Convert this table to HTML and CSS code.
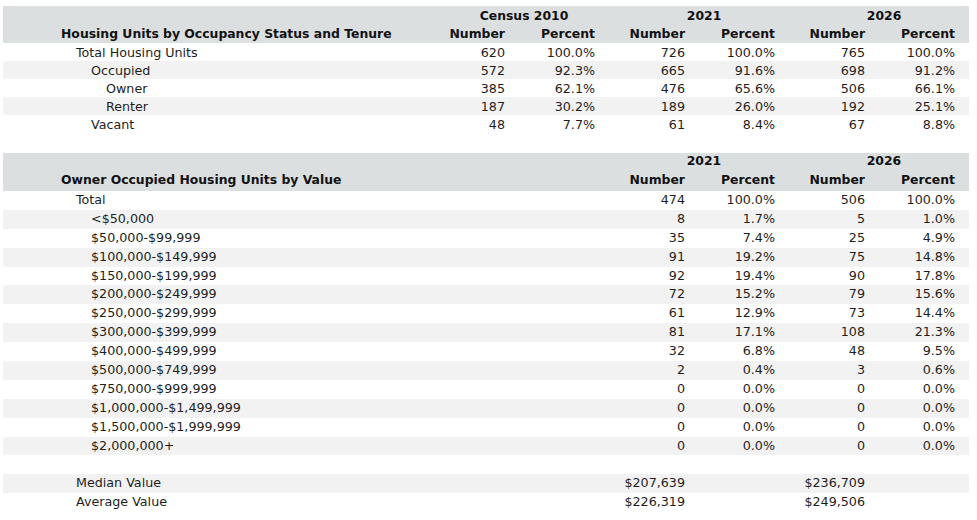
FILE: index.html
```html
<!DOCTYPE html>
<html>
<head>
<meta charset="utf-8">
<link rel="stylesheet" href="styles.css">
</head>
<body>
<div class="page">
<table class="data t1">
  <colgroup><col class="c-label"><col class="c-num"><col class="c-num"><col class="c-num"><col class="c-num"><col class="c-num"><col class="c-num"></colgroup>
  <thead>
    <tr class="h-top"><th></th><th colspan="2" class="yr">Census 2010</th><th colspan="2" class="yr">2021</th><th colspan="2" class="yr">2026</th></tr>
    <tr class="h-bot"><th class="lbl">Housing Units by Occupancy Status and Tenure</th><th class="n">Number</th><th class="n">Percent</th><th class="n">Number</th><th class="n">Percent</th><th class="n">Number</th><th class="n">Percent</th></tr>
  </thead>
  <tbody>
    <tr><td class="l1">Total Housing Units</td><td class="n">620</td><td class="n">100.0%</td><td class="n">726</td><td class="n">100.0%</td><td class="n">765</td><td class="n">100.0%</td></tr>
    <tr><td class="l2">Occupied</td><td class="n">572</td><td class="n">92.3%</td><td class="n">665</td><td class="n">91.6%</td><td class="n">698</td><td class="n">91.2%</td></tr>
    <tr><td class="l3">Owner</td><td class="n">385</td><td class="n">62.1%</td><td class="n">476</td><td class="n">65.6%</td><td class="n">506</td><td class="n">66.1%</td></tr>
    <tr><td class="l3">Renter</td><td class="n">187</td><td class="n">30.2%</td><td class="n">189</td><td class="n">26.0%</td><td class="n">192</td><td class="n">25.1%</td></tr>
    <tr><td class="l2">Vacant</td><td class="n">48</td><td class="n">7.7%</td><td class="n">61</td><td class="n">8.4%</td><td class="n">67</td><td class="n">8.8%</td></tr>
  </tbody>
</table>

<table class="data t2">
  <colgroup><col class="c-label"><col class="c-num"><col class="c-num"><col class="c-num"><col class="c-num"><col class="c-num"><col class="c-num"></colgroup>
  <thead>
    <tr class="h-top"><th></th><th colspan="2"></th><th colspan="2" class="yr">2021</th><th colspan="2" class="yr">2026</th></tr>
    <tr class="h-bot"><th class="lbl">Owner Occupied Housing Units by Value</th><th></th><th></th><th class="n">Number</th><th class="n">Percent</th><th class="n">Number</th><th class="n">Percent</th></tr>
  </thead>
  <tbody>
    <tr><td class="l1">Total</td><td></td><td></td><td class="n">474</td><td class="n">100.0%</td><td class="n">506</td><td class="n">100.0%</td></tr>
    <tr><td class="l2">&lt;$50,000</td><td></td><td></td><td class="n">8</td><td class="n">1.7%</td><td class="n">5</td><td class="n">1.0%</td></tr>
    <tr><td class="l2">$50,000-$99,999</td><td></td><td></td><td class="n">35</td><td class="n">7.4%</td><td class="n">25</td><td class="n">4.9%</td></tr>
    <tr><td class="l2">$100,000-$149,999</td><td></td><td></td><td class="n">91</td><td class="n">19.2%</td><td class="n">75</td><td class="n">14.8%</td></tr>
    <tr><td class="l2">$150,000-$199,999</td><td></td><td></td><td class="n">92</td><td class="n">19.4%</td><td class="n">90</td><td class="n">17.8%</td></tr>
    <tr><td class="l2">$200,000-$249,999</td><td></td><td></td><td class="n">72</td><td class="n">15.2%</td><td class="n">79</td><td class="n">15.6%</td></tr>
    <tr><td class="l2">$250,000-$299,999</td><td></td><td></td><td class="n">61</td><td class="n">12.9%</td><td class="n">73</td><td class="n">14.4%</td></tr>
    <tr><td class="l2">$300,000-$399,999</td><td></td><td></td><td class="n">81</td><td class="n">17.1%</td><td class="n">108</td><td class="n">21.3%</td></tr>
    <tr><td class="l2">$400,000-$499,999</td><td></td><td></td><td class="n">32</td><td class="n">6.8%</td><td class="n">48</td><td class="n">9.5%</td></tr>
    <tr><td class="l2">$500,000-$749,999</td><td></td><td></td><td class="n">2</td><td class="n">0.4%</td><td class="n">3</td><td class="n">0.6%</td></tr>
    <tr><td class="l2">$750,000-$999,999</td><td></td><td></td><td class="n">0</td><td class="n">0.0%</td><td class="n">0</td><td class="n">0.0%</td></tr>
    <tr><td class="l2">$1,000,000-$1,499,999</td><td></td><td></td><td class="n">0</td><td class="n">0.0%</td><td class="n">0</td><td class="n">0.0%</td></tr>
    <tr><td class="l2">$1,500,000-$1,999,999</td><td></td><td></td><td class="n">0</td><td class="n">0.0%</td><td class="n">0</td><td class="n">0.0%</td></tr>
    <tr><td class="l2">$2,000,000+</td><td></td><td></td><td class="n">0</td><td class="n">0.0%</td><td class="n">0</td><td class="n">0.0%</td></tr>
    <tr class="blank"><td colspan="7"></td></tr>
    <tr><td class="l1">Median Value</td><td></td><td></td><td class="n">$207,639</td><td></td><td class="n">$236,709</td><td></td></tr>
    <tr><td class="l1">Average Value</td><td></td><td></td><td class="n">$226,319</td><td></td><td class="n">$249,506</td><td></td></tr>
  </tbody>
</table>
</div>
</body>
</html>
```

FILE: styles.css
```css
html, body {
  margin: 0;
  padding: 0;
  background: #ffffff;
}

.page {
  padding: 6px 0 0 3px;
  font-family: "DejaVu Sans", Verdana, sans-serif;
  font-size: 12.7px;
  color: #1e1e1e;
}

.data {
  width: 966px;
  table-layout: fixed;
  border-collapse: collapse;
  border-spacing: 0;
}

.c-label { width: 426px; }
.c-num { width: 90px; }

.data th,
.data td {
  padding: 0;
  white-space: nowrap;
  line-height: 15px;
}

.data thead tr {
  background: #dcdfe0;
}

.data thead th {
  font-weight: bold;
  font-size: 12.4px;
  color: #111111;
}

.t1 .h-top { height: 18px; }
.t1 .h-bot { height: 19px; }
.t2 .h-top { height: 15px; }
.t2 .h-bot { height: 23px; }

.t1 tbody tr { height: 18px; }
.t2 tbody tr { height: 18.9px; }
.t2 tbody td { padding-bottom: 2px; }

.t2 { margin-top: 20px; }

.data tbody tr:nth-child(even) {
  background: #f2f2f2;
}

.data .yr {
  text-align: center;
  padding-left: 10px;
}

.data .n {
  text-align: right;
  padding-right: 14px;
}

.data .lbl {
  text-align: left;
  padding-left: 58px;
}

.data .l1 { padding-left: 73px; }
.data .l2 { padding-left: 88px; }
.data .l3 { padding-left: 103px; }
```
